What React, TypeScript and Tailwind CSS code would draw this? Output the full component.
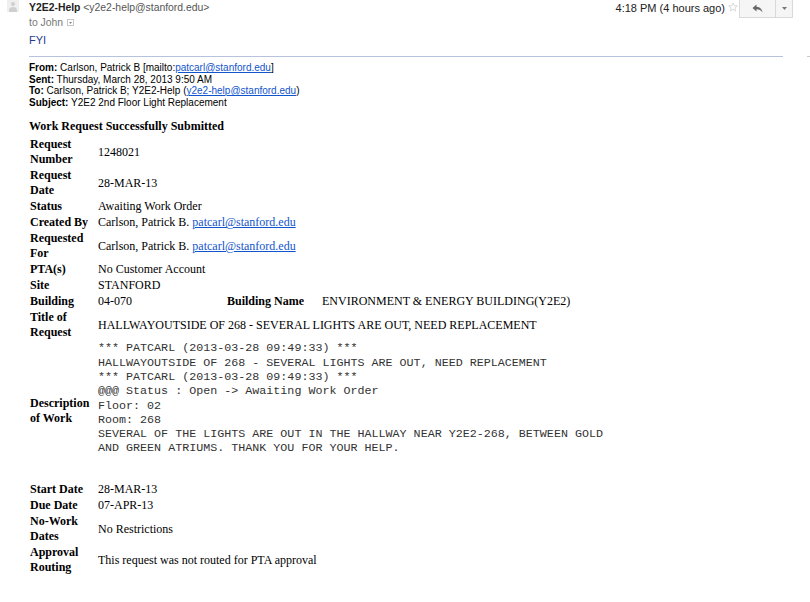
const mono = `*** PATCARL (2013-03-28 09:49:33) ***
HALLWAYOUTSIDE OF 268 - SEVERAL LIGHTS ARE OUT, NEED REPLACEMENT
*** PATCARL (2013-03-28 09:49:33) ***
@@@ Status : Open -> Awaiting Work Order
Floor: 02
Room: 268
SEVERAL OF THE LIGHTS ARE OUT IN THE HALLWAY NEAR Y2E2-268, BETWEEN GOLD
AND GREEN ATRIUMS. THANK YOU FOR YOUR HELP.`;

function Row({ label, children }: { label: React.ReactNode; children: React.ReactNode }) {
  return (
    <div className="flex items-center pb-px">
      <div className="w-[69px] shrink-0 pl-px font-bold leading-[15px]">{label}</div>
      <div className="leading-[15px]">{children}</div>
    </div>
  );
}

function Mail({ children }: { children: React.ReactNode }) {
  return <a className="text-[#1155cc] underline">{children}</a>;
}

export default function App() {
  return (
    <div className="relative w-[810px] h-[602px] overflow-hidden bg-white font-['Liberation_Sans',Arial,sans-serif] text-[#222]">
      {/* Header */}
      <div className="flex">
        <div className="w-[29px] shrink-0 pl-[7px]">
          <div className="relative w-[12px] h-[12px] overflow-hidden bg-[#efefef]">
            <div className="absolute left-[4px] top-[2px] w-[4px] h-[4px] rounded-full bg-[#cfcfcf]" />
            <div className="absolute left-[2px] top-[7px] w-[8px] h-[5px] rounded-t-[4px] bg-[#cfcfcf]" />
          </div>
        </div>
        <div className="flex-1 pr-[17px]">
          <div className="flex items-start h-[15px] text-[10.4px]">
            <div className="leading-[14px] pt-px">
              <span className="font-bold">Y2E2-Help</span>{' '}
              <span className="text-[#555]">&lt;y2e2-help@stanford.edu&gt;</span>
            </div>
            <div className="ml-auto flex items-start">
              <span className="leading-[14px] pt-px text-[#222] text-[11px]">4:18 PM (4 hours ago)</span>
              <svg className="ml-[3px] mt-[2px]" width="10" height="10" viewBox="0 0 10 10">
                <polygon points="5,0.8 6.2,3.7 9.3,3.9 6.9,5.9 7.7,9 5,7.3 2.3,9 3.1,5.9 0.7,3.9 3.8,3.7" fill="none" stroke="#cfcfcf" strokeWidth="0.8" />
              </svg>
              <div className="ml-[1px] -mt-px flex h-[19px] border border-[#d9d9d9] bg-[#f5f5f5]">
                <div className="flex w-[36px] items-center justify-center border-r border-[#d9d9d9]">
                  <svg width="11" height="9" viewBox="0 0 11 9">
                    <path d="M4.5 0.5 L0.5 4 L4.5 7.5 V5.3 C7.2 5.3 9 6.2 10.5 8.5 C10 5.2 8 2.8 4.5 2.7 Z" fill="#666" />
                  </svg>
                </div>
                <div className="flex w-[16px] items-center justify-center">
                  <svg width="5" height="3" viewBox="0 0 5 3">
                    <path d="M0 0 H5 L2.5 3 Z" fill="#777" />
                  </svg>
                </div>
              </div>
            </div>
          </div>
          <div className="flex items-center gap-[4px] h-[15px] text-[10.4px] text-[#777]">
            <span>to John</span>
            <span className="flex w-[7px] h-[7px] items-center justify-center border border-[#c8c8c8]">
              <svg width="3" height="2" viewBox="0 0 3 2">
                <path d="M0 0 H3 L1.5 2 Z" fill="#888" />
              </svg>
            </span>
          </div>
          <div className="pt-[3px] h-[26px] text-[11px] leading-[14px] text-[#1f3d92]">FYI</div>
          <div className="mr-[10px] h-px bg-[#b7c3dc]" />
        </div>
      </div>
      <div className="absolute right-0 top-[56px] w-[3px] h-px bg-[#c8c8c8]" />

      {/* Forwarded header */}
      <div className="pl-[29px] pt-[5px] text-[10px] leading-[11.6px] text-black">
        <div>
          <b>From:</b> Carlson, Patrick B [mailto:<Mail>patcarl@stanford.edu</Mail>]
        </div>
        <div>
          <b>Sent:</b> Thursday, March 28, 2013 9:50 AM
        </div>
        <div>
          <b>To:</b> Carlson, Patrick B; Y2E2-Help (<Mail>y2e2-help@stanford.edu</Mail>)
        </div>
        <div>
          <b>Subject:</b> Y2E2 2nd Floor Light Replacement
        </div>
      </div>

      {/* Work request */}
      <div className="pl-[29px] pt-[11px] font-['Liberation_Serif','Times_New_Roman',serif] text-[12px] text-black">
        <div className="font-bold leading-[15px] pb-[3px]">Work Request Successfully Submitted</div>
        <Row label={<>Request<br />Number</>}>1248021</Row>
        <Row label={<>Request<br />Date</>}>28-MAR-13</Row>
        <Row label="Status">Awaiting Work Order</Row>
        <Row label="Created By">
          Carlson, Patrick B. <Mail>patcarl@stanford.edu</Mail>
        </Row>
        <Row label={<>Requested<br />For</>}>
          Carlson, Patrick B. <Mail>patcarl@stanford.edu</Mail>
        </Row>
        <Row label="PTA(s)">No Customer Account</Row>
        <Row label="Site">STANFORD</Row>
        <Row label="Building">
          <div className="flex">
            <span className="w-[129px]">04-070</span>
            <span className="w-[95px] font-bold">Building Name</span>
            <span>ENVIRONMENT &amp; ENERGY BUILDING(Y2E2)</span>
          </div>
        </Row>
        <Row label={<>Title of<br />Request</>}>HALLWAYOUTSIDE OF 268 - SEVERAL LIGHTS ARE OUT, NEED REPLACEMENT</Row>
        <div className="flex items-center pb-px h-[141px]">
          <div className="w-[69px] shrink-0 pl-px font-bold leading-[15px]">
            Description
            <br />
            of Work
          </div>
          <pre className="h-[140px] font-['Liberation_Mono','Courier_New',monospace] text-[11.7px] leading-[14.3px] text-[#333]">{mono}</pre>
        </div>
        <Row label="Start Date">28-MAR-13</Row>
        <Row label="Due Date">07-APR-13</Row>
        <Row label={<>No-Work<br />Dates</>}>No Restrictions</Row>
        <Row label={<>Approval<br />Routing</>}>This request was not routed for PTA approval</Row>
      </div>
    </div>
  );
}
